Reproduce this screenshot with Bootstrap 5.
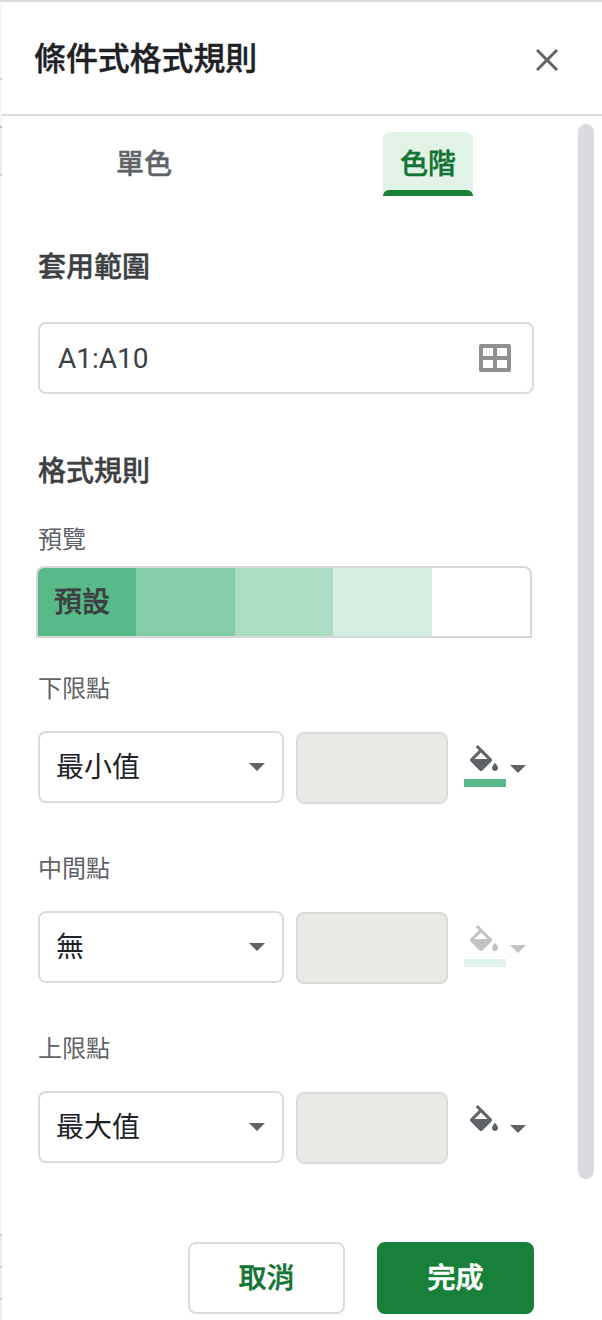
<!DOCTYPE html>
<html lang="zh-Hant">
<head>
<meta charset="utf-8">
<meta name="viewport" content="width=device-width, initial-scale=1">
<title>條件式格式規則</title>
<link href="https://cdn.jsdelivr.net/npm/bootstrap@5.3.0/dist/css/bootstrap.min.css" rel="stylesheet">
<style>
body{font-family:Roboto,"Noto Sans CJK TC",sans-serif;color:#3c4043;background:#fff;font-size:28px;line-height:40px}
.shell{height:1320px;border-top:2px solid #dadada;overflow:hidden}
.sheet-edge{width:2px;background:linear-gradient(#bbb,#bbb) 0 124px/2px 2px no-repeat,linear-gradient(#d0d0d0,#d0d0d0) 0 76px/2px 2px no-repeat,linear-gradient(#d0d0d0,#d0d0d0) 0 172px/2px 2px no-repeat,linear-gradient(#d0d0d0,#d0d0d0) 0 1232px/2px 2px no-repeat,linear-gradient(#d0d0d0,#d0d0d0) 0 1264px/2px 2px no-repeat,linear-gradient(#d0d0d0,#d0d0d0) 0 1296px/2px 2px no-repeat,linear-gradient(#ececec,#ececec) 0 124px/2px 48px no-repeat,linear-gradient(#ececec,#ececec) 0 1232px/2px 90px no-repeat,#f5f5f5}
.panel-head{height:114px;border-bottom:2px solid #dadada;padding:0 43px 0 32px}
.panel-title{font-size:31.9px;font-weight:500;color:#202124;line-height:48px;padding-top:1px}
.panel-title,.tab-item,.sect,.preview span,.foot .btn{-webkit-text-stroke:.4px currentColor}
.close-btn{width:24px;height:24px;margin-top:3px}
.panel-main{height:1064px;padding:0 0 0 36px}
.form-col{width:496px}
.tabs{height:64px;margin-top:16px;padding-left:61px}
.tab-item{width:90px;height:64px;font-weight:500;color:#5f6368;background:none;border:0;padding:2px 0 0;line-height:40px}
.tab-item.on{color:#137333;background:#e1f3e6;border-radius:8px 8px 0 0;overflow:hidden;padding:0;margin-left:194px}
.tab-item.on span{height:58px;padding-top:13px}
.tab-item.on i{height:6px;background:#188038;border-radius:6px 6px 0 0}
.sect{font-size:28px;font-weight:500;line-height:40px;margin:52px 0 0}
.sect-rules{margin-top:56px}
.sub{font-size:24px;line-height:36px;color:#5f6368}
.box{height:72px;border:2px solid #dadcdc;border-radius:8px;background:#fff}
.box span{padding-top:2px}
.range-box{padding:0 21px 0 18px;margin-top:34px}
.preview{width:496px;height:72px;margin:8px 0 0 -2px;border:2px solid #d6d8d7;border-radius:8px 8px 0 0;overflow:hidden}
.preview div{flex:1 1 0}
.s1{background:#57ba88}.s2{background:#84cda8}.s3{background:#abddc5}.s4{background:#d5eee2}
.preview span{color:#3c4043;font-weight:500;padding:2px 0 0 16px}
.pick{width:246px;padding:0 17px 0 16px;color:#202124}
.val{width:152px;height:72px;background:#e9eae4;margin:1px 16px 0 12px}
.caret{width:16px;height:8px;background:#5f6368;clip-path:polygon(0 0,100% 0,50% 100%)}
.fill-caret{margin:34px 0 0 4px}
.fill-btn{width:42px;height:42px;margin-top:14px}
.fill-btn svg{display:block;margin-left:2px}
.fill-btn i{height:8px;margin-top:-2px;background:#57ba88}
.row-point{height:73px;margin-top:24px}
.off{opacity:.38}
.off .fill-btn i{background:#b2dfc9}
.bar-col{width:16px;height:1055px;margin:8px 8px 0 0;border-radius:8px;background:#dadbde}
.foot{padding:62px 68px 0 0;gap:32px}
.foot .btn{width:157px;height:72px;font-size:28px;font-weight:500;border-radius:8px;border-width:2px;padding:2px 0 0}
.btn-cancel{color:#137333;border-color:#dadcdc;background:#fff}
.foot .btn-done{color:#fff;background:#188038;border-color:#188038;-webkit-text-stroke-width:.7px}
</style>
</head>
<body>
<svg class="d-none"><symbol id="fill" viewBox="0 0 18 18"><path d="M14.5 8.87S13 10.49 13 11.5c0 .83.67 1.5 1.5 1.5s1.5-.67 1.5-1.5c0-1.01-1.5-2.63-1.5-2.63zm-1.79-2.08L5.91 0 4.85 1.06l1.59 1.59-4.15 4.14c-.39.39-.39 1.02 0 1.41l4.5 4.5c.2.2.45.3.71.3s.51-.1.71-.3l4.5-4.5c.39-.39.39-1.02 0-1.41zM4.21 7L7.5 3.71 10.79 7H4.21z"/></symbol></svg>
<div class="shell d-flex">
  <div class="sheet-edge flex-shrink-0"></div>
  <div class="flex-grow-1">
    <header class="panel-head d-flex align-items-center justify-content-between">
      <h1 class="panel-title mb-0">條件式格式規則</h1>
      <svg class="close-btn" viewBox="0 0 24 24" stroke="#5f6368" stroke-width="3" fill="none"><path d="M2 2L22 22M22 2L2 22"/></svg>
    </header>
    <div class="panel-main d-flex justify-content-between">
      <main class="form-col">
        <div class="tabs d-flex">
          <button class="tab-item">單色</button>
          <button class="tab-item on d-flex flex-column"><span class="w-100">色階</span><i class="w-100"></i></button>
        </div>
        <h2 class="sect">套用範圍</h2>
        <div class="box range-box d-flex align-items-center justify-content-between">
          <span>A1:A10</span>
          <svg width="32" height="28" viewBox="0 0 32 28"><path fill="#8f8f92" fill-rule="evenodd" d="M2 0H30a2 2 0 0 1 2 2V26a2 2 0 0 1-2 2H2a2 2 0 0 1-2-2V2a2 2 0 0 1 2-2ZM4 4V12H14V4ZM18 4V12H28V4ZM4 16V24H14V16ZM18 16V24H28V16Z"/></svg>
        </div>
        <h2 class="sect" style="margin-top:58px">格式規則</h2>
        <div class="sub" style="margin-top:30px">預覽</div>
        <div class="preview d-flex">
          <div class="s1 d-flex align-items-center"><span class="text-nowrap">預設</span></div>
          <div class="s2"></div><div class="s3"></div><div class="s4"></div><div></div>
        </div>
        <div class="sub" style="margin-top:33px">下限點</div>
        <div class="row-point d-flex">
          <div class="box pick d-flex align-items-center justify-content-between"><span>最小值</span><i class="caret"></i></div>
          <div class="box val"></div>
          <div class="d-flex">
            <div class="fill-btn"><svg width="36" height="36" fill="#5f6368"><use href="#fill"/></svg><i class="d-block"></i></div>
            <i class="caret fill-caret"></i>
          </div>
        </div>
        <div class="sub" style="margin-top:47px">中間點</div>
        <div class="row-point d-flex">
          <div class="box pick d-flex align-items-center justify-content-between"><span>無</span><i class="caret"></i></div>
          <div class="box val"></div>
          <div class="d-flex off">
            <div class="fill-btn"><svg width="36" height="36" fill="#5f6368"><use href="#fill"/></svg><i class="d-block"></i></div>
            <i class="caret fill-caret"></i>
          </div>
        </div>
        <div class="sub" style="margin-top:47px">上限點</div>
        <div class="row-point d-flex">
          <div class="box pick d-flex align-items-center justify-content-between"><span>最大值</span><i class="caret"></i></div>
          <div class="box val"></div>
          <div class="d-flex">
            <div class="fill-btn"><svg width="36" height="36" fill="#5f6368"><use href="#fill"/></svg></div>
            <i class="caret fill-caret"></i>
          </div>
        </div>
      </main>
      <div class="bar-col flex-shrink-0"></div>
    </div>
    <footer class="foot d-flex justify-content-end">
      <button class="btn btn-cancel">取消</button>
      <button class="btn btn-done">完成</button>
    </footer>
  </div>
</div>
<script src="https://cdn.jsdelivr.net/npm/bootstrap@5.3.0/dist/js/bootstrap.bundle.min.js"></script>
</body>
</html>
